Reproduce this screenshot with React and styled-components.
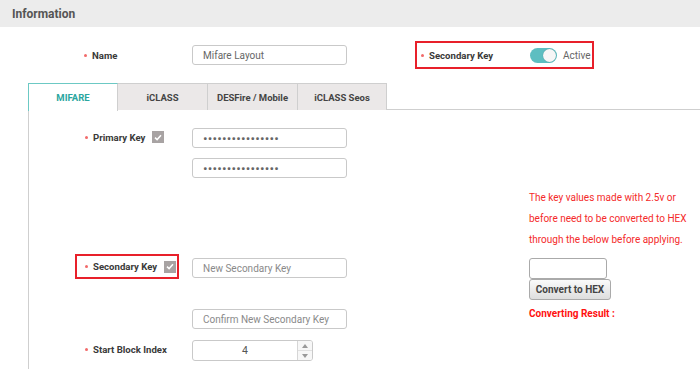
import React from 'react'
import styled, { createGlobalStyle, css } from 'styled-components'

const GlobalStyle = createGlobalStyle`
  html, body {
    margin: 0;
    padding: 0;
    background: #fff;
  }
  body {
    font-family: Roboto, "Liberation Sans", Arial, sans-serif;
  }
  * { box-sizing: border-box; }
`

const Page = styled.div`
  width: 700px;
  height: 369px;
  overflow: hidden;
  background: #fff;
`
const Header = styled.div`
  height: 27px;
  background: #ececec;
  display: flex;
  align-items: center;
  padding-left: 12px;
  font-size: 12px;
  font-weight: 700;
  color: #555;
`
const TopRow = styled.div`
  display: flex;
  align-items: center;
  margin-top: 14px;
  height: 28px;
`
const NameCell = styled.div`
  width: 192px;
  padding-left: 84px;
  display: flex;
  align-items: center;
`
const Dot = styled.span`
  width: 3px;
  height: 3px;
  border-radius: 50%;
  background: #f26a6a;
  margin-right: 5px;
  flex: none;
`
const LabelText = styled.span`
  font-size: 9.6px;
  font-weight: 700;
  color: #3a3a3a;
  white-space: nowrap;
`
const TextBox = styled.div`
  width: 155px;
  height: 20px;
  border: 1px solid #c9c9c9;
  border-radius: 3px;
  background: #fff;
  padding-left: 10px;
  display: flex;
  align-items: center;
  font-size: ${(p) => (p.$secret ? '13.5px' : '10px')};
  color: ${(p) => (p.$placeholder ? '#8a8a8a' : '#666')};
  letter-spacing: ${(p) => (p.$secret ? '0.2px' : '0')};
  flex: none;
`
const KeyBox = styled.div`
  margin-left: 68px;
  width: 179px;
  height: 28px;
  border: 2px solid #e8202a;
  padding-left: 4px;
  display: flex;
  align-items: center;
`
const KeyLabel = styled.div`
  width: 109px;
  display: flex;
  align-items: center;
`
const Toggle = styled.div`
  width: 27px;
  height: 15px;
  border-radius: 8px;
  background: #5dbec1;
  position: relative;
  flex: none;
  &::after {
    content: '';
    position: absolute;
    right: 1px;
    top: 1px;
    width: 13px;
    height: 13px;
    border-radius: 50%;
    background: #f6f6f6;
    box-shadow: 0 0 1px rgba(0, 0, 0, 0.3);
  }
`
const ToggleText = styled.span`
  margin-left: 6px;
  font-size: 10px;
  color: #666;
`
const TabSection = styled.div`
  margin-top: 14px;
  margin-left: 28px;
`
const TabBar = styled.div`
  display: flex;
  height: 27px;
  border-bottom: 1px solid #cfcfcf;
`
const Tab = styled.div`
  width: ${(p) => p.$w}px;
  height: 27px;
  margin-left: -1px;
  border: 1px solid #cfcfcf;
  border-bottom: none;
  background: #ebe8e8;
  display: flex;
  align-items: center;
  justify-content: center;
  font-size: 9.5px;
  font-weight: 700;
  color: #444;
  &:first-child { margin-left: 0; }
  ${(p) =>
    p.$active &&
    css`
      background: #fff;
      color: #2aa6a0;
      border-color: #6cc9c4;
      border-right-color: #cfcfcf;
      height: 28px;
      position: relative;
      z-index: 1;
    `}
`
const Panel = styled.div`
  display: flex;
  border-left: 1px solid #cfcfcf;
  height: 260px;
`
const LeftCol = styled.div`
  width: 500px;
  padding-top: 18px;
`
const Row = styled.div`
  display: flex;
  align-items: flex-start;
  margin-top: ${(p) => p.$top || 0}px;
`
const LabelCell = styled.div`
  width: 163px;
  padding-left: 46px;
  flex: none;
`
const FieldLabel = styled.div`
  display: flex;
  width: ${(p) => (p.$boxed ? '104px' : 'fit-content')};
  align-items: center;
  height: ${(p) => (p.$boxed ? 25 : 18)}px;
  padding-left: 8px;
  border: 2px solid ${(p) => (p.$boxed ? '#e8202a' : 'transparent')};
  margin-top: ${(p) => (p.$boxed ? -4 : 0)}px;
`
const Check = styled.span`
  width: 12px;
  height: 12px;
  margin-left: 7px;
  background: #a8a3a3;
  display: inline-flex;
  align-items: center;
  justify-content: center;
  flex: none;
`
const Stack = styled.div`
  display: flex;
  flex-direction: column;
  gap: 10px;
`
const Spinner = styled.div`
  display: flex;
  width: 121px;
  height: 21px;
  border: 1px solid #c9c9c9;
  border-radius: 3px;
  overflow: hidden;
`
const SpinValue = styled.div`
  flex: 1;
  display: flex;
  align-items: center;
  justify-content: center;
  font-size: 10.5px;
  color: #555;
`
const SpinArrows = styled.div`
  width: 15px;
  border-left: 1px solid #d6d6d6;
  display: flex;
  flex-direction: column;
  background: #f7f7f7;
`
const SpinBtn = styled.div`
  flex: 1;
  display: flex;
  align-items: center;
  justify-content: center;
  & + & { border-top: 1px solid #e0e0e0; }
`
const RightCol = styled.div`
  padding-top: 77px;
`
const Note = styled.div`
  font-size: 10px;
  line-height: 21px;
  color: #f42a2a;
  width: 170px;
`
const SmallInput = styled.div`
  margin-top: 8px;
  width: 78px;
  height: 21px;
  border: 1px solid #aaa;
  border-radius: 3px;
  background: #fff;
`
const ConvertButton = styled.div`
  width: 82px;
  height: 21px;
  border: 1px solid #aaa;
  border-radius: 3px;
  background: linear-gradient(#fafafa, #dedede);
  display: flex;
  align-items: center;
  justify-content: center;
  font-size: 10px;
  font-weight: 700;
  color: #444;
`
const Result = styled.div`
  margin-top: 8px;
  font-size: 10px;
  font-weight: 700;
  color: #ff1010;
`

const CheckMark = () => (
  <svg width="8" height="7" viewBox="0 0 8 7">
    <path d="M1 3.6 L3.1 5.6 L7 1.2" stroke="#fff" strokeWidth="1.5" fill="none" />
  </svg>
)

const Label = ({ children }) => (
  <>
    <Dot />
    <LabelText>{children}</LabelText>
  </>
)

const tabs = [
  { name: 'MIFARE', w: 90 },
  { name: 'iCLASS', w: 91 },
  { name: 'DESFire / Mobile', w: 91 },
  { name: 'iCLASS Seos', w: 90 },
]

const secret = '••••••••••••••••'

export default function App() {
  return (
    <Page>
      <GlobalStyle />
      <Header>Information</Header>
      <TopRow>
        <NameCell>
          <Label>Name</Label>
        </NameCell>
        <TextBox>Mifare Layout</TextBox>
        <KeyBox>
          <KeyLabel>
            <Label>Secondary Key</Label>
          </KeyLabel>
          <Toggle />
          <ToggleText>Active</ToggleText>
        </KeyBox>
      </TopRow>
      <TabSection>
        <TabBar>
          {tabs.map((t, i) => (
            <Tab key={t.name} $w={t.w} $active={i === 0}>
              {t.name}
            </Tab>
          ))}
        </TabBar>
        <Panel>
          <LeftCol>
            <Row>
              <LabelCell>
                <FieldLabel>
                  <Label>Primary Key</Label>
                  <Check><CheckMark /></Check>
                </FieldLabel>
              </LabelCell>
              <Stack>
                <TextBox $secret>{secret}</TextBox>
                <TextBox $secret>{secret}</TextBox>
              </Stack>
            </Row>
            <Row $top={80}>
              <LabelCell>
                <FieldLabel $boxed>
                  <Label>Secondary Key</Label>
                  <Check><CheckMark /></Check>
                </FieldLabel>
              </LabelCell>
              <TextBox $placeholder>New Secondary Key</TextBox>
            </Row>
            <Row $top={30}>
              <LabelCell />
              <TextBox $placeholder>Confirm New Secondary Key</TextBox>
            </Row>
            <Row $top={11}>
              <LabelCell>
                <FieldLabel>
                  <Label>Start Block Index</Label>
                </FieldLabel>
              </LabelCell>
              <Spinner>
                <SpinValue>4</SpinValue>
                <SpinArrows>
                  <SpinBtn>
                    <svg width="6" height="4" viewBox="0 0 6 4"><path d="M0 4 L3 0 L6 4 Z" fill="#999" /></svg>
                  </SpinBtn>
                  <SpinBtn>
                    <svg width="6" height="4" viewBox="0 0 6 4"><path d="M0 0 L3 4 L6 0 Z" fill="#999" /></svg>
                  </SpinBtn>
                </SpinArrows>
              </Spinner>
            </Row>
          </LeftCol>
          <RightCol>
            <Note>
              The key values made with 2.5v or before need to be converted to HEX through the below before applying.
            </Note>
            <SmallInput />
            <ConvertButton>Convert to HEX</ConvertButton>
            <Result>Converting Result :</Result>
          </RightCol>
        </Panel>
      </TabSection>
    </Page>
  )
}
